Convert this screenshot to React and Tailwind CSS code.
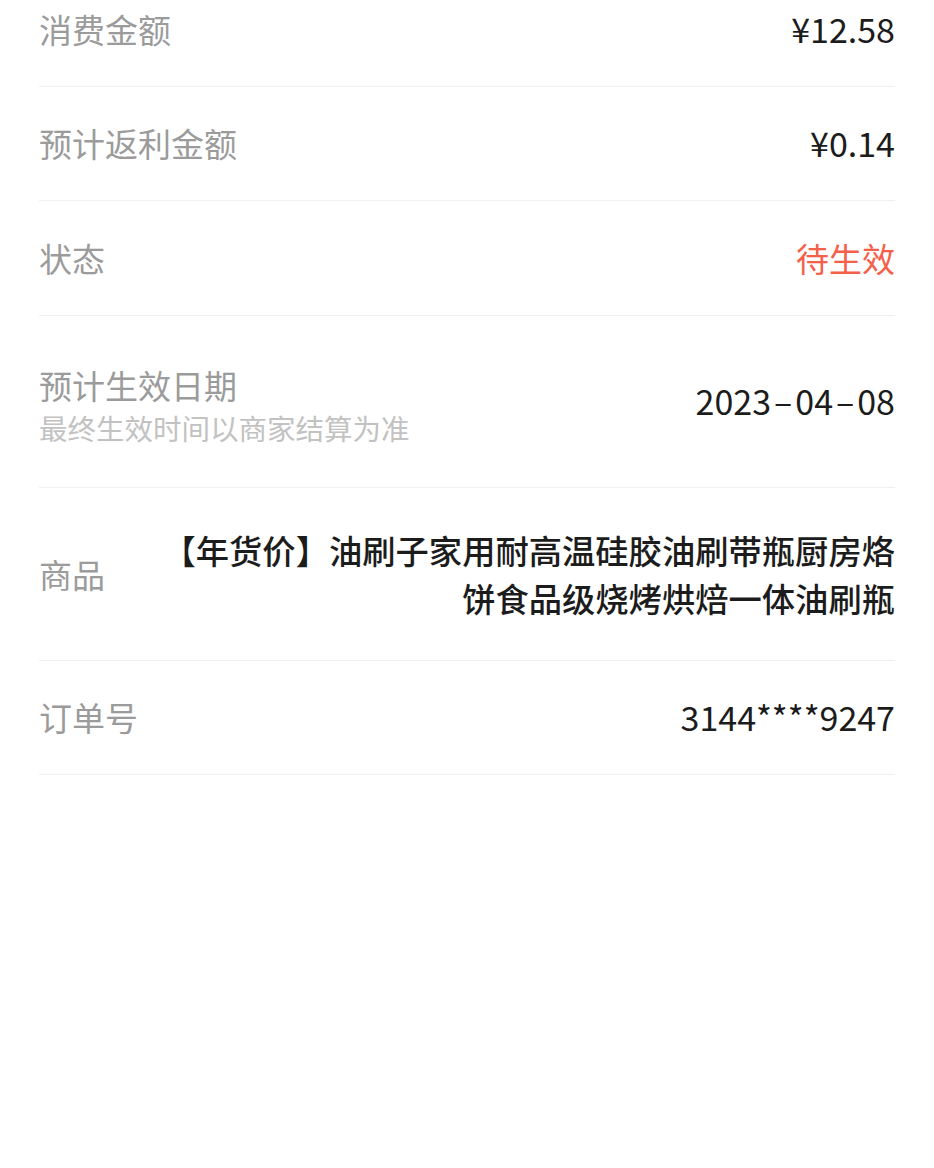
import React from "react";

const Dash = () => <span className="px-[3px]">–</span>;

const rows = [
  { label: "消费金额", value: "¥12.58", num: true },
  { label: "预计返利金额", value: "¥0.14", num: true },
  { label: "状态", value: "待生效", tone: "red" },
  {
    label: "预计生效日期",
    sub: "最终生效时间以商家结算为准",
    value: (
      <>
        2023<Dash />04<Dash />08
      </>
    ),
    num: true,
  },
  {
    label: "商品",
    value: "【年货价】油刷子家用耐高温硅胶油刷带瓶厨房烙饼食品级烧烤烘焙一体油刷瓶",
    long: true,
  },
  { label: "订单号", value: "3144****9247", num: true },
];

const Row = ({ label, sub, value, tone, long, num }) => {
  const tall = sub || long;
  return (
    <div
      className={`flex items-center justify-between border-b border-[#f0f0f0] ${
        tall ? "h-[172.5px]" : "h-[114.5px]"
      } ${sub ? "pt-[8px]" : ""}`}
    >
      <div className="shrink-0">
        <div className="text-[33px] leading-[40px] text-[#9b9b9b]">{label}</div>
        {sub && (
          <div className="mt-[5px] text-[28.5px] leading-[36px] text-[#c2c2c2]">
            {sub}
          </div>
        )}
      </div>
      <div
        className={`text-right ${
          long
            ? "max-w-[740px] text-[33.3px] leading-[48px] font-medium"
            : num
            ? "text-[34px] leading-[40px]"
            : "text-[33px] leading-[40px]"
        } ${tone === "red" ? "text-[#f5604a]" : "text-[#1c1c1c]"} ${
          sub ? "-mt-[8px]" : ""
        }`}
      >
        {value}
      </div>
    </div>
  );
};

export default function App() {
  return (
    <div
      className="min-h-[1168px] bg-white overflow-hidden"
      style={{ fontFamily: '"Noto Sans CJK SC", "Noto Sans", sans-serif' }}
    >
      <div className="px-[39px] -mt-[28px]">
        {rows.map((r) => (
          <Row key={r.label} {...r} />
        ))}
      </div>
    </div>
  );
}
